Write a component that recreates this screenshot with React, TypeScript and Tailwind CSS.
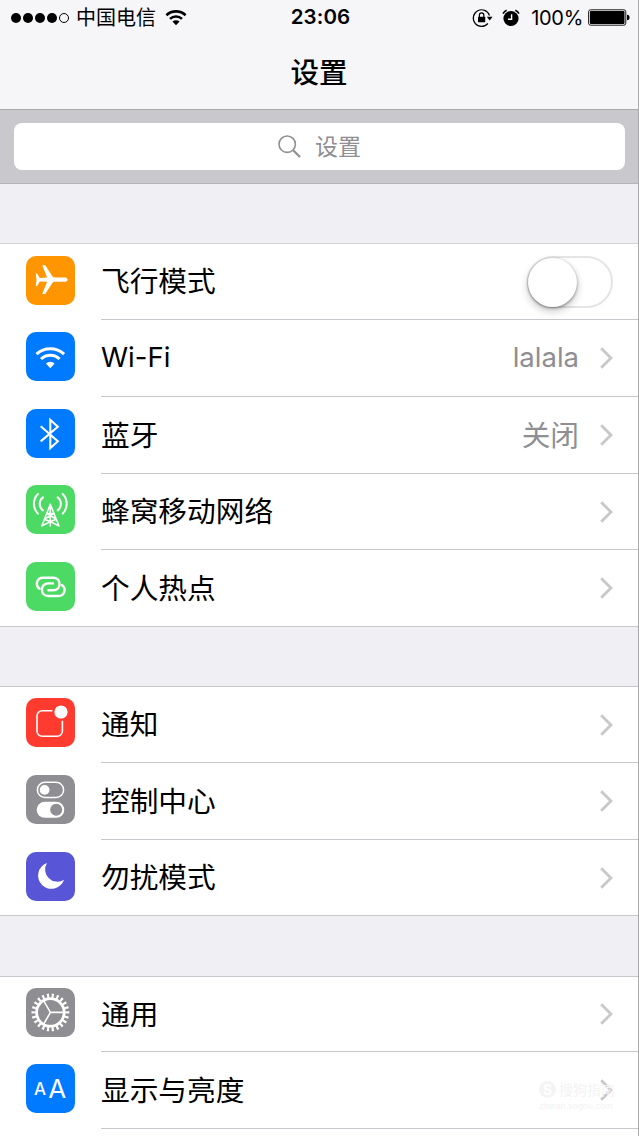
import type { ReactNode } from "react";

const AirplaneIcon = () => (
  <path
    fill="#fff"
    d="M41.6 23.7c0-1.500-1.400-2.100-3.400-2.100h-9.800c-.8 0-1.300-.4-1.800-1L19.200 9.300h-3l4.900 12.300-7.300.3-2.700-4.500H9.800l.7 6.300-.7 6.300h1.300l2.700-4.500 7.300.3-4.900 12.300h3l7.400-11.300c.5-.6 1-1 1.800-1h9.800c2 0 3.400-.6 3.400-2.100z"
  />
);

const WifiIcon = () => (
  <>
    <g fill="none" stroke="#fff" strokeWidth="3">
      <path d="M10.500 22.200a20 20 0 0 1 27.600 0" />
      <path d="M15 27a13.200 13.200 0 0 1 18.600 0" />
    </g>
    <path fill="#fff" d="M19.900 31.500a6.600 6.600 0 0 1 8.800 0L24.300 36.200z" />
  </>
);

const BluetoothIcon = () => (
  <path
    fill="none"
    stroke="#fff"
    strokeWidth="2.1"
    d="M14.700 17.200 31.800 32.200 24.300 39.200V10.800l7.500 7L14.700 32.400"
  />
);

const CellularIcon = () => (
  <g fill="none" stroke="#fff" strokeLinecap="round">
    <path strokeWidth="2" d="M16.900 12.400a8.200 8.200 0 0 0 0 13M31.700 12.400a8.200 8.200 0 0 1 0 13" />
    <path strokeWidth="2" d="M11.900 9a14 14 0 0 0 0 19.600M36.700 9a14 14 0 0 1 0 19.600" />
    <path
      strokeWidth="1.5"
      d="M24.300 19.200v21.800M24.300 19.200l-8.500 21.800M24.300 19.200 33 41M21 28.500h6.700M21 28.500l9 5.500M27.700 28.500l-9 5.500M18.700 34.500l5.600 2 5.600-2M24.300 36.500l-8.200 4.300M24.300 36.500l8.400 4.300"
    />
  </g>
);

const HotspotIcon = () => (
  <g fill="none" stroke="#fff" strokeWidth="2.4" strokeLinecap="round">
    <path d="M13.600 26.700C8.800 23.500 10.600 15.700 17 15.700h10.200c8.400 0 8.400 12.600 0 12.600h-4.800" />
    <path d="M35.800 23c4.800 3.200 3 11-3.400 11H22.200c-8.400 0-8.400-12.600 0-12.600H27" />
  </g>
);

const NotificationIcon = () => (
  <>
    <path
      fill="none"
      stroke="#fff"
      strokeWidth="1.6"
      d="M26.400 12.700H16.200a5.200 5.200 0 0 0-5.200 5.200v15.200a5.200 5.200 0 0 0 5.200 5.200h15a5.200 5.200 0 0 0 5.200-5.200V22.800"
    />
    <circle cx="35" cy="14" r="6.6" fill="#fff" />
  </>
);

const ControlCenterIcon = () => (
  <>
    <rect x="11.4" y="7.3" width="26.2" height="15.2" rx="7.6" fill="none" stroke="#fff" strokeWidth="1.5" />
    <circle cx="18.6" cy="14.9" r="4.9" fill="#fff" />
    <rect x="10.7" y="26.8" width="27.6" height="16" rx="8" fill="#fff" />
    <circle cx="30.2" cy="34.8" r="6" fill="#8e8e93" />
  </>
);

const MoonIcon = () => (
  <path fill="#fff" d="M21 11a13.300 13.300 0 1 0 17 16.700A12.200 12.200 0 0 1 21 11z" />
);

const GearIcon = () => (
  <g fill="none" stroke="#fff">
    <circle cx="24.4" cy="24.4" r="13.8" strokeWidth="2.8" />
    {/* 22 teeth around the rim */}
    <circle
      cx="24.4"
      cy="24.4"
      r="16.8"
      strokeWidth="4.2"
      pathLength="44"
      strokeDasharray="0.9 1.1"
      strokeDashoffset="0.45"
    />
    <path strokeWidth="1.6" d="M24.400 24.400H38M24.400 24.400l-6.900-12M24.400 24.400l-6.900 12" />
  </g>
);

const DisplayIcon = () => (
  <g fill="#fff" fontFamily="Inter, sans-serif">
    <text x="7.9" y="31.4" fontSize="17" fontWeight="500">
      A
    </text>
    <text x="22.2" y="33.6" fontSize="26">
      A
    </text>
  </g>
);

const Chevron = () => (
  <svg className="ml-[20px] h-[24px] w-[15px]" viewBox="0 0 15 24">
    <path d="M2.200 2.200 12 12l-9.800 9.800" fill="none" stroke="#c7c7cc" strokeWidth="2.8" />
  </svg>
);

const Switch = () => (
  <button className="mr-[1px] mt-[1px] flex h-[52px] w-[86px] items-center rounded-full border-[2.5px] border-[#e5e5e5] bg-white">
    <span className="-ml-[1px] h-[49px] w-[49px] shrink-0 rounded-full bg-white shadow-[0_4px_9px_rgba(0,0,0,0.22),0_1px_3px_rgba(0,0,0,0.4)]" />
  </button>
);

// Latin text runs a little smaller than Chinese at the same line size
const textSize = (text: string) =>
  /^[a-z-]+$/i.test(text) ? "text-[27.5px]" : "text-[28.7px] pt-[2px]";

interface RowProps {
  label: string;
  color: string;
  icon: ReactNode;
  height: string;
  value?: string;
  control?: ReactNode;
  raised?: boolean;
  last?: boolean;
}

const Row = ({ label, color, icon, height, value, control, raised, last }: RowProps) => (
  <div className={`flex bg-white pl-[26px] ${height} ${last ? "border-b border-[#c8c7cc]" : ""}`}>
    <div
      className={`h-[49px] w-[49px] shrink-0 overflow-hidden rounded-[10px] ${raised ? "mt-[11px]" : "mt-[12px]"} ${color}`}
    >
      <svg viewBox="0 0 49 49" className="h-full w-full">
        {icon}
      </svg>
    </div>
    <div className={`ml-[26px] flex flex-1 items-center pr-[24px] ${last ? "" : "border-b border-[#c8c7cc]"}`}>
      <span className={`flex-1 leading-none ${textSize(label)}`}>{label}</span>
      {value && <span className={`leading-none text-[#8e8e93] ${textSize(value)}`}>{value}</span>}
      {control ?? <Chevron />}
    </div>
  </div>
);

const StatusBar = () => (
  <div className="flex h-[35px] items-center pl-[11px] pr-[8px]">
    <div className="flex flex-1 items-center">
      <div className="flex gap-[2px]">
        <span className="h-[10px] w-[10px] rounded-full bg-black" />
        <span className="h-[10px] w-[10px] rounded-full bg-black" />
        <span className="h-[10px] w-[10px] rounded-full bg-black" />
        <span className="h-[10px] w-[10px] rounded-full bg-black" />
        <span className="h-[10px] w-[10px] rounded-full border border-black" />
      </div>
      <span className="ml-[7px] pt-px text-[20px] leading-none">中国电信</span>
      <svg className="ml-[9px] h-[17px] w-[22px]" viewBox="0 0 22 17">
        <g fill="none" stroke="#000" strokeWidth="2.6">
          <path d="M1.400 6.200a14 14 0 0 1 19.200 0" />
          <path d="M5 9.900a8.800 8.800 0 0 1 12 0" />
        </g>
        <path d="M7.500 12.600a5 5 0 0 1 7 0L11 16.200z" />
      </svg>
    </div>
    <span className="text-[20.5px] font-semibold leading-none tracking-[0.1px]">23:06</span>
    <div className="flex flex-1 items-center justify-end">
      <svg className="h-[20px] w-[21px]" viewBox="0 0 21 20">
        <path d="M15.900 15.500A8.300 8.300 0 1 1 17.500 7.500" fill="none" stroke="#000" strokeWidth="1.2" />
        <path d="M14.800 8.800h5.800l-2.900 3.600z" />
        <rect x="6" y="8.8" width="7.2" height="5.4" rx=".5" />
        <path d="M7.400 9V7.100a2.200 2.200 0 0 1 4.400 0V9" fill="none" stroke="#000" strokeWidth="1.2" />
      </svg>
      <svg className="ml-[9px] h-[18px] w-[18px]" viewBox="0 0 18 18">
        <circle cx="9" cy="9.5" r="7.6" />
        <path d="M1 4.700a7 7 0 0 1 3.700-3.400M17 4.700a7 7 0 0 0-3.700-3.400" fill="none" stroke="#000" strokeWidth="1.5" />
        <path d="M9.600 5.200v5H6" fill="none" stroke="#fff" strokeWidth="1.4" />
      </svg>
      <span className="ml-[11px] text-[20px] leading-none tracking-[-0.3px]">100%</span>
      <svg className="ml-[5px] h-[17px] w-[42px]" viewBox="0 0 42 17">
        <rect x=".6" y=".8" width="37.2" height="15.4" rx="2" fill="none" stroke="#000" strokeWidth=".9" />
        <rect x="1.9" y="2.100" width="34.6" height="12.8" rx="1" />
        <path d="M39 5.800c1.800 0 2.600 1.200 2.600 2.700s-.8 2.700-2.600 2.700z" />
      </svg>
    </div>
  </div>
);

export default function App() {
  return (
    <div className="relative h-[1136px] w-[639px] overflow-hidden border-r border-[#a9a9ab] bg-[#efeff4] font-['Inter','Noto_Sans_CJK_SC',sans-serif] text-black">
      <header className="h-[110px] border-b border-[#acacae] bg-[#f6f6f8]">
        <StatusBar />
        <h1 className="mt-[24px] text-center text-[28.5px] font-medium leading-none">设置</h1>
      </header>

      <div className="h-[74px] border-b border-[#b5b4b9] bg-[#c9c8cd] pl-[14px] pr-[13px] pt-[13px]">
        <div className="flex h-[47px] items-center justify-center rounded-lg bg-white text-[#8e8e93]">
          <svg className="mr-[13px] h-[24px] w-[24px]" viewBox="0 0 24 24">
            <circle cx="9.2" cy="9.2" r="8.2" fill="none" stroke="currentColor" strokeWidth="1.6" />
            <path d="m15 15 7 7" stroke="currentColor" strokeWidth="2.2" />
          </svg>
          <span className="pt-px text-[23px] leading-none">设置</span>
        </div>
      </div>

      {/* Connectivity */}
      <section className="mt-[59px] border-t border-[#d3d2d8]">
        <Row label="飞行模式" color="bg-[#ff9500]" icon={<AirplaneIcon />} height="h-[76px]" control={<Switch />} />
        <Row label="Wi-Fi" color="bg-[#007aff]" icon={<WifiIcon />} height="h-[77px]" value="lalala" />
        <Row label="蓝牙" color="bg-[#007aff]" icon={<BluetoothIcon />} height="h-[77px]" value="关闭" />
        <Row label="蜂窝移动网络" color="bg-[#4cd964]" icon={<CellularIcon />} height="h-[76px]" raised />
        <Row label="个人热点" color="bg-[#4cd964]" icon={<HotspotIcon />} height="h-[77px]" last />
      </section>

      {/* Notifications */}
      <section className="mt-[59px] border-t border-[#c8c7cc]">
        <Row label="通知" color="bg-[#ff3b30]" icon={<NotificationIcon />} height="h-[76px]" raised />
        <Row label="控制中心" color="bg-[#8e8e93]" icon={<ControlCenterIcon />} height="h-[77px]" />
        <Row label="勿扰模式" color="bg-[#5856d6]" icon={<MoonIcon />} height="h-[76px]" last />
      </section>

      {/* General */}
      <section className="mt-[60px] border-t border-[#c8c7cc] bg-white pb-2">
        <Row label="通用" color="bg-[#8e8e93]" icon={<GearIcon />} height="h-[75px]" raised />
        <Row label="显示与亮度" color="bg-[#007aff]" icon={<DisplayIcon />} height="h-[77px]" />
      </section>

      {/* Watermark over the last row */}
      <div className="absolute left-[539px] top-[1081px] w-[80px] text-[#f3f3f3]">
        <div className="flex items-center gap-[3px] leading-none">
          <span className="flex h-[17px] w-[17px] items-center justify-center rounded-full bg-[#f4f4f4] text-[14px] font-bold text-white">
            S
          </span>
          <span className="text-[14px]">搜狗指南</span>
        </div>
        <div className="mt-[4px] text-[8.5px] leading-none">zhinan.sogou.com</div>
      </div>
    </div>
  );
}
